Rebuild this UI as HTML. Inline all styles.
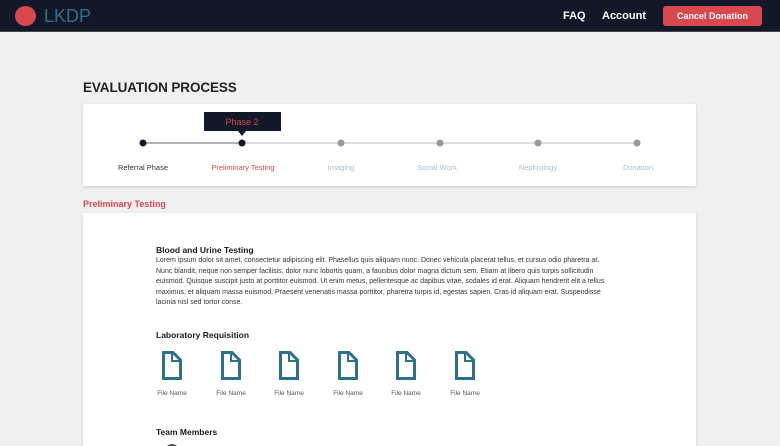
<!DOCTYPE html>
<html><head><meta charset="utf-8">
<style>
*{margin:0;padding:0;box-sizing:border-box}
html{width:780px;height:446px;overflow:hidden}
body{width:780px;height:446px;overflow:hidden;background:#f0f0f0;font-family:"Liberation Sans",sans-serif;position:relative}
.nav{position:absolute;left:0;top:0;width:780px;height:32px;background:#131828;border-bottom:1px solid #444}
.abs{position:absolute}
.card{position:absolute;background:#fff;box-shadow:0 1px 3px rgba(0,0,0,.15)}
.lbl{position:absolute;top:59px;font-size:7.5px;transform:translateX(-50%);white-space:nowrap}
.fn{position:absolute;font-size:6.5px;color:#555;transform:translateX(-50%);white-space:nowrap}
</style></head><body>
<div class="nav">
  <div class="abs" style="left:15px;top:6px;width:21px;height:20px;border-radius:50%;background:#d9474f"></div>
  <div class="abs" style="left:44px;top:6px;font-size:18px;color:#2e6f8e">LKDP</div>
  <div class="abs" style="left:563px;top:10px;font-size:11px;font-weight:bold;color:#fff">FAQ</div>
  <div class="abs" style="left:602px;top:10px;font-size:11px;font-weight:bold;color:#fff">Account</div>
  <div class="abs" style="left:663px;top:6px;width:99px;height:20px;background:#d9474f;border-radius:3px;color:#fff;font-size:9px;font-weight:bold;text-align:center;line-height:20px">Cancel Donation</div>
</div>
<div class="abs" style="left:83px;top:80px;font-size:13.5px;font-weight:bold;color:#222;letter-spacing:-0.1px">EVALUATION PROCESS</div>
<div class="card" style="left:83px;top:104px;width:613px;height:82px">
  <svg class="abs" style="left:0;top:0" width="613" height="82">
    <line x1="60" y1="39" x2="159" y2="39" stroke="#666" stroke-width="1"/>
    <line x1="159" y1="39" x2="554" y2="39" stroke="#bbb" stroke-width="1"/>
    <circle cx="60" cy="39" r="3.5" fill="#131828"/>
    <circle cx="159" cy="39" r="3.5" fill="#131828"/>
    <circle cx="258" cy="39" r="3.5" fill="#999"/>
    <circle cx="357" cy="39" r="3.5" fill="#999"/>
    <circle cx="455" cy="39" r="3.5" fill="#999"/>
    <circle cx="554" cy="39" r="3.5" fill="#999"/>
    <rect x="121" y="8" width="77" height="19" fill="#131828"/>
    <polygon points="155,27 163,27 159,32" fill="#131828"/>
    <text x="159" y="21" font-size="9" fill="#d9474f" text-anchor="middle" font-family="Liberation Sans">Phase 2</text>
  </svg>
  <div class="lbl" style="left:60px;color:#333">Referral Phase</div>
  <div class="lbl" style="left:160px;color:#d9474f">Preliminary Testing</div>
  <div class="lbl" style="left:258px;color:#a9bccb">Imaging</div>
  <div class="lbl" style="left:354px;color:#a9bccb">Social Work</div>
  <div class="lbl" style="left:455px;color:#a9bccb">Nephrology</div>
  <div class="lbl" style="left:555px;color:#a9bccb">Donation</div>
</div>
<div class="abs" style="left:83px;top:199px;font-size:9px;font-weight:bold;color:#d9474f">Preliminary Testing</div>
<div class="card" style="left:83px;top:213px;width:613px;height:240px">
  <div class="abs" style="left:73px;top:32px;font-size:8.5px;font-weight:bold;color:#1a1a1a">Blood and Urine Testing</div>
  <div class="abs" style="left:73px;top:43px;font-size:7px;line-height:10.6px;color:#333;white-space:nowrap">Lorem ipsum dolor sit amet, consectetur adipiscing elit. Phasellus quis aliquam nunc. Donec vehicula placerat tellus, et cursus odio pharetra at.<br>Nunc blandit, neque non semper facilisis, dolor nunc lobortis quam, a faucibus dolor magna dictum sem. Etiam at libero quis turpis sollicitudin<br>euismod. Quisque suscipit justo at porttitor euismod. Ut enim metus, pellentesque ac dapibus vitae, sodales id erat. Aliquam hendrerit elit a tellus<br>maximus, et aliquam massa euismod. Praesent venenatis massa porttitor, pharetra turpis id, egestas sapien. Cras id aliquam erat. Suspendisse<br>lacinia nisl sed tortor conse.</div>
  <div class="abs" style="left:73px;top:117px;font-size:8.5px;font-weight:bold;color:#1a1a1a">Laboratory Requisition</div>
  <svg class="abs" style="left:0;top:135px" width="613" height="35">
    <g fill="none" stroke="#2e6f8e" stroke-width="3" stroke-linejoin="miter">
      <g transform="translate(79,3)"><path d="M1.5 1.5 H11 L18.5 9 V27.5 H1.5 Z"/><path d="M10 2 V10 H18" stroke-width="2"/></g>
      <g transform="translate(138,3)"><path d="M1.5 1.5 H11 L18.5 9 V27.5 H1.5 Z"/><path d="M10 2 V10 H18" stroke-width="2"/></g>
      <g transform="translate(196,3)"><path d="M1.5 1.5 H11 L18.5 9 V27.5 H1.5 Z"/><path d="M10 2 V10 H18" stroke-width="2"/></g>
      <g transform="translate(255,3)"><path d="M1.5 1.5 H11 L18.5 9 V27.5 H1.5 Z"/><path d="M10 2 V10 H18" stroke-width="2"/></g>
      <g transform="translate(313,3)"><path d="M1.5 1.5 H11 L18.5 9 V27.5 H1.5 Z"/><path d="M10 2 V10 H18" stroke-width="2"/></g>
      <g transform="translate(372,3)"><path d="M1.5 1.5 H11 L18.5 9 V27.5 H1.5 Z"/><path d="M10 2 V10 H18" stroke-width="2"/></g>
    </g>
  </svg>
  <div class="fn" style="left:89px;top:177px">File Name</div>
  <div class="fn" style="left:148px;top:177px">File Name</div>
  <div class="fn" style="left:206px;top:177px">File Name</div>
  <div class="fn" style="left:265px;top:177px">File Name</div>
  <div class="fn" style="left:323px;top:177px">File Name</div>
  <div class="fn" style="left:382px;top:177px">File Name</div>
  <div class="abs" style="left:73px;top:214px;font-size:8.5px;font-weight:bold;color:#1a1a1a">Team Members</div>
  <div class="abs" style="left:82px;top:231px;width:14px;height:14px;border-radius:50%;border-top:2px solid #555"></div>
</div>
</body></html>
